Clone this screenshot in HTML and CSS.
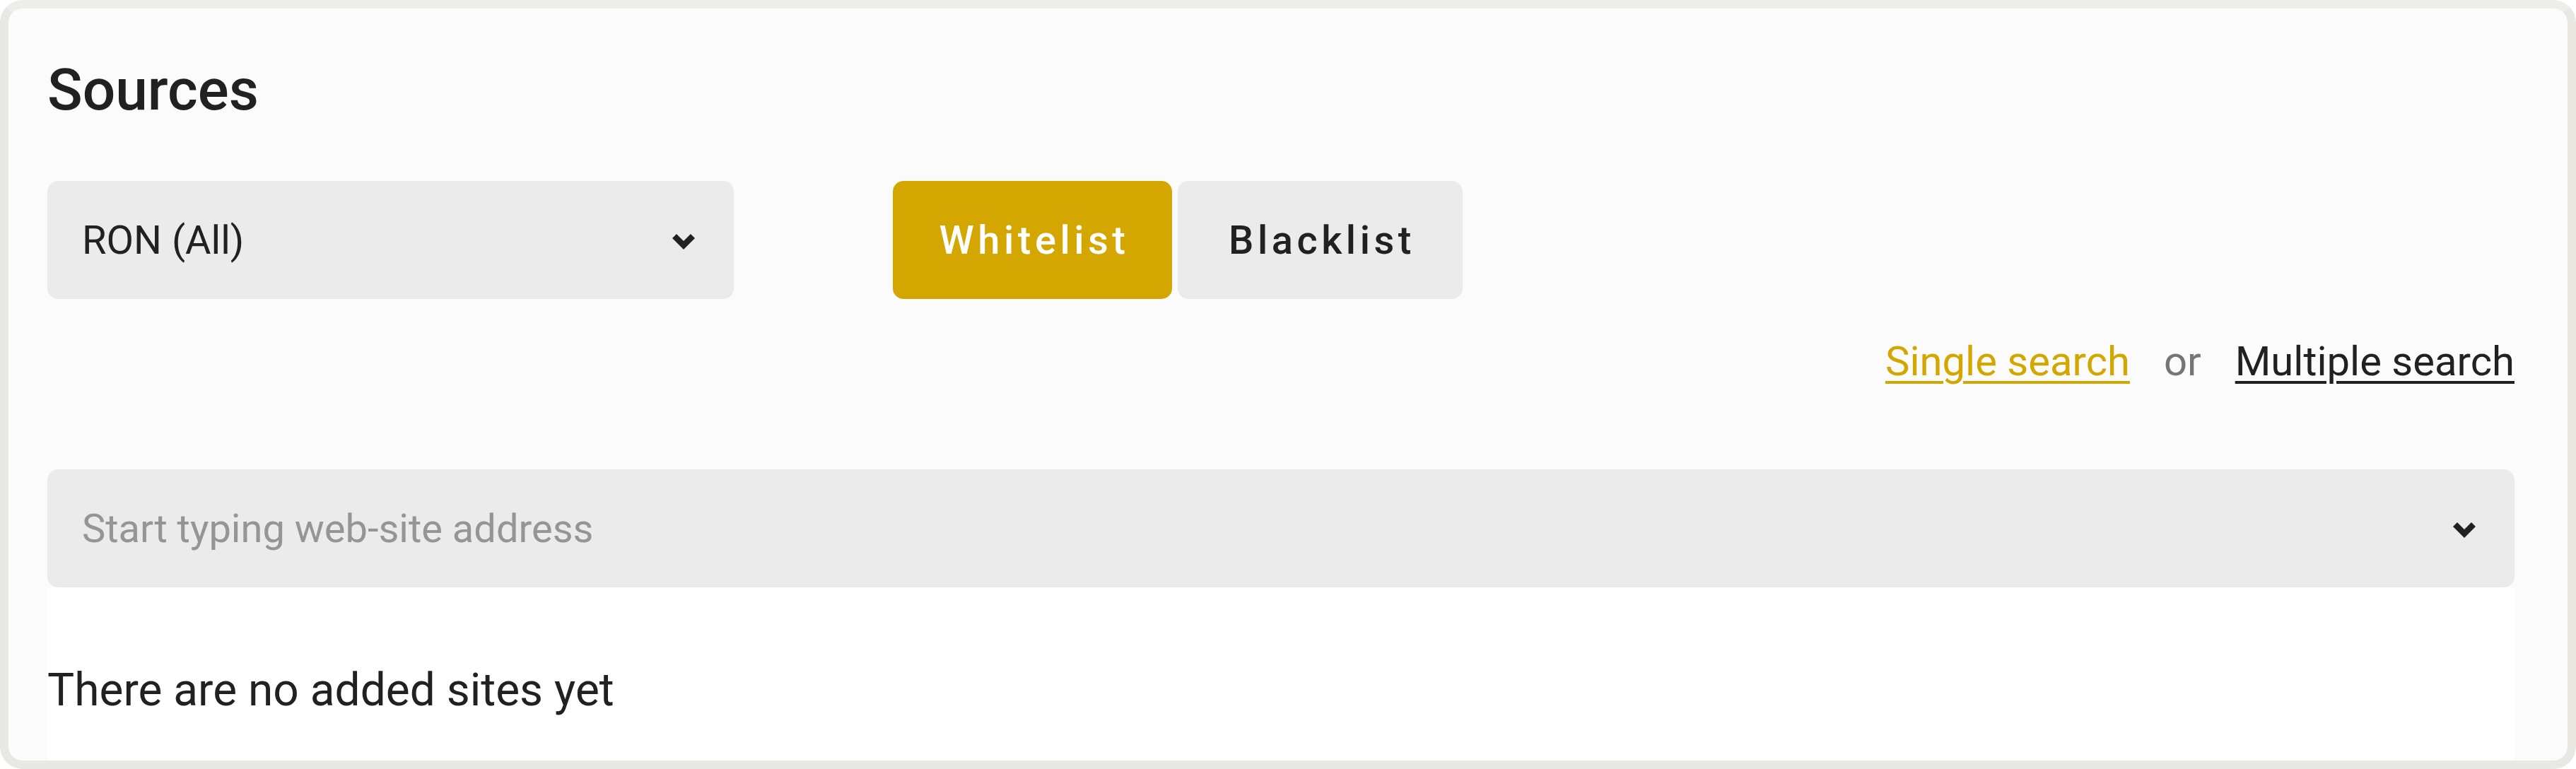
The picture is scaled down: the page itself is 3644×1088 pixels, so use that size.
FILE: index.html
```html
<!DOCTYPE html>
<html lang="en">
<head>
<meta charset="utf-8">
<title>Sources</title>
<link rel="stylesheet" href="styles.css">
</head>
<body>
<div class="card">
  <h1 class="title">Sources</h1>
  <div class="row">
    <div class="select select-small">
      <span class="select-text">RON (All)</span>
      <svg class="chev" width="32" height="22" viewBox="0 0 32 22"><polygon points="0,6 6,0 16,10 26,0 32,6 16,22" fill="#212121"/></svg>
    </div>
    <div class="toggle">
      <button class="tbtn active">Whitelist</button>
      <button class="tbtn">Blacklist</button>
    </div>
  </div>
  <div class="links">
    <a class="link link-active">Single search</a>
    <span class="or">or</span>
    <a class="link">Multiple search</a>
  </div>
  <div class="select select-wide">
    <span class="placeholder">Start typing web-site address</span>
    <svg class="chev" width="32" height="22" viewBox="0 0 32 22"><polygon points="0,6 6,0 16,10 26,0 32,6 16,22" fill="#212121"/></svg>
  </div>
  <div class="list">
    <p class="empty">There are no added sites yet</p>
  </div>
</div>
</body>
</html>
```
FILE: styles.css
```css
html, body {
  margin: 0;
  padding: 0;
  background: #ffffff;
}
body {
  font-family: Roboto, "Liberation Sans", sans-serif;
  color: #212121;
}
.card {
  box-sizing: border-box;
  width: 3644px;
  height: 1088px;
  border: 12px solid #e9e8e3;
  border-top-color: #eeede9;
  border-radius: 32px;
  background: #fbfbfb;
  padding: 0 75px 0 55px;
  overflow: hidden;
}
.title {
  margin: 0;
  padding-top: 75px;
  font-size: 82px;
  line-height: 80px;
  font-weight: 500;
  color: #212121;
}
.row {
  display: flex;
  align-items: center;
  margin-top: 89px;
}
.select {
  box-sizing: border-box;
  display: flex;
  align-items: center;
  justify-content: space-between;
  height: 167px;
  background: #ebebeb;
  border-radius: 15px;
  padding: 0 55px 0 49px;
  font-size: 56px;
}
.select-small {
  width: 971px;
}
.select-text {
  color: #212121;
}
.chev {
  display: block;
  flex: none;
  margin-top: 4px;
}
.toggle {
  display: flex;
  gap: 8px;
  margin-left: 225px;
}
.tbtn {
  box-sizing: border-box;
  height: 167px;
  border: none;
  border-radius: 15px;
  background: #ebebeb;
  color: #212121;
  font-family: Roboto, "Liberation Sans", sans-serif;
  font-size: 56px;
  font-weight: 500;
  letter-spacing: 5.5px;
  padding: 0 0 0 5px;
  width: 403px;
}
.tbtn.active {
  background: #d4a700;
  color: #ffffff;
  width: 395px;
}
.links {
  display: flex;
  justify-content: flex-end;
  align-items: baseline;
  margin-top: 55px;
  font-size: 58px;
  line-height: 66px;
}
.link {
  color: #212121;
  text-decoration: underline;
  text-decoration-thickness: 4px;
  text-underline-offset: 8px;
}
.link-active {
  color: #d4a700;
}
.or {
  color: #757575;
  margin: 0 48px;
}
.select-wide {
  margin-top: 120px;
}
.placeholder {
  color: #959595;
}
.list {
  background: #ffffff;
  height: 400px;
  padding-top: 110px;
  box-sizing: border-box;
}
.empty {
  margin: 0;
  font-size: 64px;
  line-height: 72px;
  color: #212121;
}
```
